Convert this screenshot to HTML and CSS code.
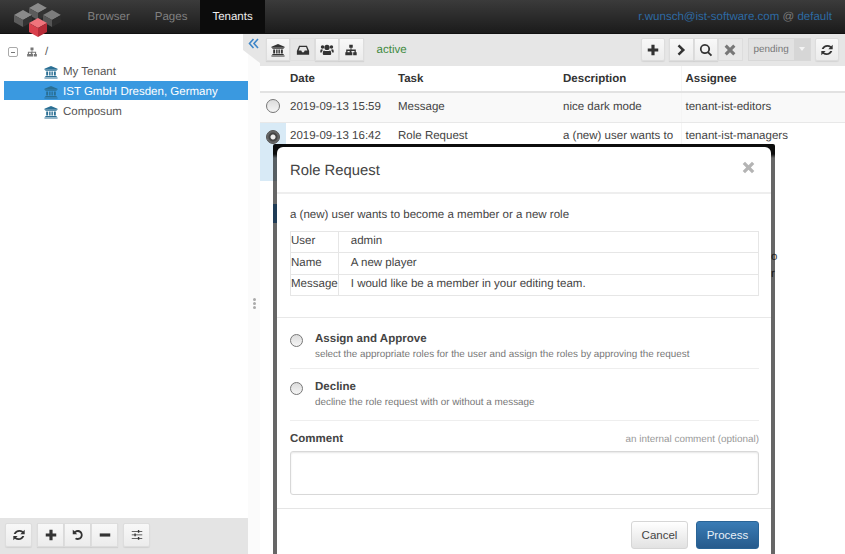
FILE: index.html
```html
<!DOCTYPE html>
<html lang="en">
<head>
    <meta charset="UTF-8">
    <title>Tenants</title>
    <link rel="stylesheet" href="styles.css">
</head>
<body>
    <svg class="icon-defs" width="0" height="0">
        <defs>
            <symbol id="i-bank" viewBox="0 0 16 16"><path d="M8 1l7.500 3.400v1H.5v-1zM1.500 6h13v.8h-13zM2.500 7.400h2.200v4.600H2.500zM5.900 7.400h1.600v4.600H5.900zM8.500 7.400h1.600v4.600H8.500zM11.300 7.400h2.200v4.600h-2.200zM1.500 12.600h13v1.100h-13zM.5 14.200h15v1.300H.5z"/></symbol>
            <symbol id="i-inbox" viewBox="0 0 16 16"><path fill-rule="evenodd" d="M3.500 3h9l2.500 6v4.500H1V9zM4.500 4.500L3 8.700h3l1 1.800h2l1-1.800h3l-1.500-4.200z"/></symbol>
            <symbol id="i-users" viewBox="0 0 16 16"><circle cx="8" cy="5" r="3"/><circle cx="2.900" cy="4.500" r="2"/><circle cx="13.100" cy="4.500" r="2"/><path d="M4.500 8.600c1 .9 6 .9 7 0 1 .3 1.300 1.900 1.300 3.600 0 1-.6 1.600-1.500 1.600H4.700c-.9 0-1.500-.6-1.500-1.600C3.200 10.500 3.500 8.900 4.500 8.600zM.3 10c0-1.500.3-2.800 1-3 .5.500 1.200.6 1.900.5-.3.800-.2 1.300-.5 1.800-.7.500-1 1.300-1.100 1.900C.8 11.200.3 10.800.3 10zM15.700 10c0-1.500-.3-2.800-1-3-.5.500-1.200.6-1.900.5.300.8.200 1.300.5 1.800.7.500 1 1.300 1.100 1.900.8 0 1.300-.4 1.300-1.200z"/></symbol>
            <symbol id="i-sitemap" viewBox="0 0 16 16"><path d="M6 2h4v3.500H8.500V7.500h5v3h1v3.500h-4v-3.500h1.500V9h-3.500v1.500h1v3.500h-4v-3.500h1V9H4v1.500h1.500v3.500h-4v-3.500h1v-3h5V5.500H6z"/></symbol>
            <symbol id="i-refresh" viewBox="0 0 16 16"><path d="M14.500 2v5h-5l1.900-1.900C9.200 3.400 5.700 4 4.300 6.800H2C3.500 2.400 8.800.9 12.800 3.700zM1.500 14V9h5L4.600 10.900c2.200 1.700 5.700 1.100 7.100-1.700H14c-1.500 4.400-6.800 5.900-10.800 3.100z"/></symbol>
            <symbol id="i-plus" viewBox="0 0 16 16"><path d="M6.200 2h3.600v4.200H14v3.600H9.800V14H6.200V9.800H2V6.200h4.200z"/></symbol>
            <symbol id="i-minus" viewBox="0 0 16 16"><path d="M2 6.200h12v3.600H2z"/></symbol>
            <symbol id="i-next" viewBox="0 0 16 16"><path d="M5 1.800L11.500 8 5 14.200 3 12.200 7.300 8 3 3.800z"/></symbol>
            <symbol id="i-search" viewBox="0 0 16 16"><path fill-rule="evenodd" d="M6.800 1a5.800 5.800 0 0 1 4.700 9.200l3.500 3.500-1.500 1.500-3.500-3.500A5.800 5.800 0 1 1 6.800 1zm0 2a3.800 3.800 0 1 0 0 7.600 3.800 3.800 0 0 0 0-7.600z"/></symbol>
            <symbol id="i-times" viewBox="0 0 16 16"><path d="M4.300 1.800L8 5.500l3.700-3.700 2.500 2.500L10.500 8l3.700 3.700-2.500 2.500L8 10.500l-3.700 3.700-2.500-2.500L5.500 8 1.800 4.300z"/></symbol>
            <symbol id="i-undo" viewBox="0 0 16 16"><path d="M2 2v5.200h5.200L5.300 5.300c2.100-1.600 5.700-.6 6 2.500.2 3-3 4.700-5.400 3.200l-1.400 1.600c3.800 2.500 8.800.2 8.800-4.600 0-4.800-5.600-7.400-9.100-4.300z"/></symbol>
            <symbol id="i-sliders" viewBox="0 0 16 16"><path d="M2 3.500h7V2.400h1.600v1.100H14v.9h-3.400v1.100H9V4.400H2zM2 7.500h3V6.400h1.600v1.100H14v.9H6.600v1.100H5V8.400H2zM2 11.500h7v-1.100h1.600v1.100H14v.9h-3.400v1.100H9v-1.100H2z"/></symbol>
        </defs>
    </svg>

    <header class="app-header">
        <svg class="logo" width="72" height="37" viewBox="0 0 72 37">
            <g><polygon points="38,3 47,8 38,13 29,8" fill="#8a8a8a"/><polygon points="29,8 38,13 38,20 29,15" fill="#5c5c5c"/><polygon points="47,8 38,13 38,20 47,15" fill="#333"/></g>
            <g><polygon points="23,10 32,15 23,20 14,15" fill="#8a8a8a"/><polygon points="14,15 23,20 23,27 14,22" fill="#5c5c5c"/><polygon points="32,15 23,20 23,27 32,22" fill="#333"/></g>
            <g><polygon points="52,10 61,15 52,20 43,15" fill="#7c7c7c"/><polygon points="43,15 52,20 52,27 43,22" fill="#555"/><polygon points="61,15 52,20 52,27 61,22" fill="#2c2c2c"/></g>
            <g><polygon points="38,18 47,23 38,28 29,23" fill="#f0747c"/><polygon points="29,23 38,28 38,37 29,32" fill="#d9404c"/><polygon points="47,23 38,28 38,37 47,32" fill="#b72c38"/></g>
        </svg>
        <nav class="nav-tabs">
            <a class="nav-tab">Browser</a>
            <a class="nav-tab">Pages</a>
            <a class="nav-tab active">Tenants</a>
        </nav>
        <div class="user-info"><a>r.wunsch@ist-software.com</a> @ <a>default</a></div>
    </header>

    <main class="workspace">
        <aside class="tree-pane">
            <ul class="tree">
                <li class="tree-row root">
                    <span class="tree-toggle"></span>
                    <svg class="tree-icon root-icon"><use href="#i-sitemap"/></svg>
                    <span>/</span>
                </li>
                <li class="tree-row"><svg class="tree-icon"><use href="#i-bank"/></svg><span>My Tenant</span></li>
                <li class="tree-row selected"><svg class="tree-icon"><use href="#i-bank"/></svg><span>IST GmbH Dresden, Germany</span></li>
                <li class="tree-row"><svg class="tree-icon"><use href="#i-bank"/></svg><span>Composum</span></li>
            </ul>
            <div class="tree-toolbar">
                <button class="tool-btn wide"><svg><use href="#i-refresh"/></svg></button>
                <div class="btn-group">
                    <button class="tool-btn wide"><svg><use href="#i-plus"/></svg></button>
                    <button class="tool-btn wide"><svg><use href="#i-undo"/></svg></button>
                    <button class="tool-btn wide"><svg><use href="#i-minus"/></svg></button>
                </div>
                <button class="tool-btn wide"><svg><use href="#i-sliders"/></svg></button>
            </div>
        </aside>

        <div class="splitter">
            <div class="collapse-tab">
                <svg width="11" height="11" viewBox="0 0 11 11"><path d="M5.500 1L1.500 5.500l4 4.500M10 1L6 5.500l4 4.500" fill="none" stroke="#3f86c8" stroke-width="1.600"/></svg>
            </div>
            <div class="grip"><i></i><i></i><i></i></div>
        </div>

        <section class="task-pane">
            <div class="task-toolbar">
                <div class="btn-group">
                    <button class="tool-btn"><svg><use href="#i-bank"/></svg></button>
                    <button class="tool-btn pressed"><svg><use href="#i-inbox"/></svg></button>
                    <button class="tool-btn"><svg><use href="#i-users"/></svg></button>
                    <button class="tool-btn"><svg><use href="#i-sitemap"/></svg></button>
                </div>
                <span class="scope-label">active</span>
                <div class="toolbar-right">
                    <button class="tool-btn"><svg><use href="#i-plus"/></svg></button>
                    <div class="btn-group">
                        <button class="tool-btn"><svg><use href="#i-next"/></svg></button>
                        <button class="tool-btn"><svg><use href="#i-search"/></svg></button>
                        <button class="tool-btn disabled"><svg><use href="#i-times"/></svg></button>
                    </div>
                    <div class="state-select"><span>pending</span><b></b></div>
                    <button class="tool-btn"><svg><use href="#i-refresh"/></svg></button>
                </div>
            </div>
            <table class="task-table">
                <thead>
                    <tr><th class="col-select"></th><th class="col-date">Date</th><th class="col-task">Task</th><th class="col-desc">Description</th><th>Assignee</th></tr>
                </thead>
                <tbody>
                    <tr class="odd">
                        <td class="col-select"><span class="radio"></span></td>
                        <td>2019-09-13 15:59</td><td>Message</td><td>nice dark mode</td><td>tenant-ist-editors</td>
                    </tr>
                    <tr class="current">
                        <td class="col-select"><span class="radio checked"></span></td>
                        <td>2019-09-13 16:42</td><td>Role Request</td><td>a (new) user wants to become a member or a new role</td><td>tenant-ist-managers</td>
                    </tr>
                    <tr class="peek">
                        <td class="peek-select"><span class="peek-mark"></span></td>
                        <td></td><td></td><td></td>
                        <td class="peek-text"><div>o</div><div>r</div></td>
                    </tr>
                </tbody>
            </table>
        </section>
    </main>

    <div class="modal">
        <div class="modal-content">
            <div class="modal-header">
                <h4>Role Request</h4>
                <svg class="modal-close"><use href="#i-times"/></svg>
            </div>
            <div class="modal-section">
                <p class="request-text">a (new) user wants to become a member or a new role</p>
                <table class="request-table">
                    <tr><td>User</td><td>admin</td></tr>
                    <tr><td>Name</td><td>A new player</td></tr>
                    <tr><td>Message</td><td>I would like be a member in your editing team.</td></tr>
                </table>
            </div>
            <div class="modal-section form-section">
                <label class="option">
                    <span class="radio"></span>
                    <span><strong>Assign and Approve</strong><small>select the appropriate roles for the user and assign the roles by approving the request</small></span>
                </label>
                <label class="option">
                    <span class="radio"></span>
                    <span><strong>Decline</strong><small>decline the role request with or without a message</small></span>
                </label>
                <div class="comment-head"><strong>Comment</strong><small>an internal comment (optional)</small></div>
                <div class="comment-box"></div>
            </div>
            <div class="modal-footer">
                <button class="btn">Cancel</button>
                <button class="btn primary">Process</button>
            </div>
        </div>
    </div>
</body>
</html>
```

FILE: styles.css
```css
* {
    box-sizing: border-box;
}
html, body {
    height: 100%;
}
body {
    margin: 0;
    overflow: hidden;
    display: flex;
    flex-direction: column;
    position: relative;
    font-family: "Liberation Sans", Arial, sans-serif;
    font-size: 11.53px;
    text-rendering: geometricPrecision;
    color: #444;
    background: #fff;
}
.icon-defs {
    position: absolute;
}
svg {
    fill: currentColor;
}

/* header */
.app-header {
    height: 34px;
    flex: none;
    position: relative;
    z-index: 1;
    display: flex;
    align-items: flex-start;
    background: linear-gradient(#3b3b3b, #1b1b1b);
    border-bottom: 1px solid #111;
}
.logo {
    flex: none;
}
.nav-tabs {
    display: flex;
    margin-left: 3px;
}
.nav-tab {
    height: 33px;
    padding: 0 12.5px;
    line-height: 34px;
    color: #808080;
}
.nav-tab.active {
    color: #eee;
    background: #0c0c0c;
}
.user-info {
    margin-left: auto;
    padding-right: 13px;
    line-height: 34px;
    color: #7a7a7a;
}
.user-info a {
    color: #2d6aa3;
}

.workspace {
    flex: 1;
    min-height: 0;
    display: flex;
}

/* tree */
.tree-pane {
    width: 248px;
    flex: none;
    display: flex;
    flex-direction: column;
    background: #fff;
}
.tree {
    flex: 1;
    margin: 0;
    padding: 7px 0 0 4px;
    list-style: none;
}
.tree-row {
    height: 20px;
    padding: 2px 0 0 40px;
    display: flex;
    align-items: center;
    color: #555;
}
.tree-row.root {
    padding-left: 4px;
}
.tree-row.selected {
    height: 19px;
    margin-bottom: 1px;
    background: #3a99e0;
    color: #fff;
}
.tree-toggle {
    width: 10px;
    height: 10px;
    margin-right: 8px;
    border: 1px solid #aaa;
    border-radius: 2px;
    display: flex;
    align-items: center;
    justify-content: center;
}
.tree-toggle::before {
    content: "";
    width: 4px;
    height: 1px;
    background: #777;
}
.tree-icon {
    width: 14px;
    height: 14px;
    margin-right: 5px;
    color: #2a6f94;
}
.root-icon {
    width: 12px;
    height: 12px;
    margin-right: 7px;
    color: #777;
}
.tree-toolbar {
    height: 36px;
    flex: none;
    padding: 5px;
    display: flex;
    gap: 5px;
    background: #e4e4e4;
}

/* buttons */
.btn-group {
    display: flex;
}
.tool-btn {
    width: 24.4px;
    height: 23px;
    padding: 0;
    display: flex;
    align-items: center;
    justify-content: center;
    color: #333;
    background: linear-gradient(#f8f8f8, #ececec);
    border: 1px solid #ddd;
    border-radius: 2px;
    box-shadow: 0 1px 1px rgba(0, 0, 0, 0.08);
}
.tool-btn.wide {
    width: 27px;
    height: 24px;
}
.btn-group .tool-btn {
    border-radius: 0;
}
.tool-btn svg {
    width: 14px;
    height: 14px;
}
.tool-btn.pressed {
    background: #e6e6e6;
    border-color: #e0e0e0;
    box-shadow: none;
}
.tool-btn.disabled {
    background: #e8e8e8;
    color: #777;
    box-shadow: none;
}

/* splitter */
.splitter {
    width: 12px;
    flex: none;
    position: relative;
    display: flex;
    align-items: center;
    justify-content: center;
    background: #fbfbfb;
}
.collapse-tab {
    position: absolute;
    top: 0;
    right: 0;
    width: 17px;
    height: 29px;
    padding: 4px 0 0 5px;
    background: #e6e6e6;
    clip-path: polygon(0 0, 100% 0, 100% 100%, 0 55%);
}
.collapse-tab svg {
    display: block;
}
.grip {
    display: flex;
    flex-direction: column;
    gap: 1px;
    margin-top: 18px;
}
.grip i {
    width: 3px;
    height: 3px;
    border-radius: 50%;
    background: #aaa;
}

/* task list */
.task-pane {
    flex: 1;
    min-width: 0;
    display: flex;
    flex-direction: column;
}
.task-toolbar {
    height: 32px;
    flex: none;
    padding: 4px 6px;
    display: flex;
    align-items: flex-start;
    background: #e6e6e6;
}
.scope-label {
    margin-left: 13px;
    line-height: 25px;
    color: #3f8a3f;
}
.toolbar-right {
    margin-left: auto;
    display: flex;
    gap: 4px;
}
.state-select {
    width: 63px;
    height: 23px;
    margin-left: 1px;
    display: flex;
    border: 1px solid #d8d8d8;
    font-size: 9.88px;
    color: #777;
    background: #ddd;
}
.state-select span {
    flex: 1;
    padding-left: 5px;
    line-height: 22px;
    background: #e2e2e2;
}
.state-select b {
    width: 16px;
    position: relative;
    background: #d6d6d6;
}
.state-select b::after {
    content: "";
    position: absolute;
    top: 8px;
    left: 5px;
    border: 3px solid transparent;
    border-top: 4px solid #f4f4f4;
}
.task-table {
    width: 100%;
    border-collapse: collapse;
    table-layout: fixed;
}
.task-table th {
    height: 26px;
    padding: 0 5px 0 4px;
    text-align: left;
    color: #333;
    border-bottom: 2px solid #e2e2e2;
}
.task-table td {
    padding: 5px 4px;
    line-height: 16px;
    vertical-align: top;
    border-bottom: 1px solid #e8e8e8;
}
.task-table tr.odd td {
    height: 30px;
    padding-top: 6px;
    background: #f9f9f9;
}
.task-table tr.current td {
    border-bottom: 0;
}
.task-table th:last-child,
.task-table td:last-child {
    border-left: 1px solid #f5f5f5;
}
.col-select {
    width: 26px;
}
.col-date {
    width: 108px;
}
.col-task {
    width: 165px;
}
.col-desc {
    width: 122px;
}
.task-table td.col-select {
    padding: 7px 0 0 6px;
    background: #d8eaf6;
}
.task-table tr.peek td {
    border: 0;
    background: none;
}
.task-table td.peek-select {
    padding: 23px 0 0 13px;
}
.peek-mark {
    display: block;
    width: 12px;
    height: 19px;
    background: #4f95d6;
}
.task-table td.peek-text {
    padding: 68px 0 0 90px;
    line-height: 17px;
}

/* radios */
.radio {
    display: block;
    width: 14px;
    height: 14px;
    flex: none;
    border: 1px solid #777;
    border-radius: 50%;
    background: linear-gradient(#dcdcdc, #f5f5f5);
}
.radio.checked {
    border: 1px solid #555;
    background: radial-gradient(circle, #eee 0, #eee 2px, #444 3px, #444 4px, #666 5px);
}

/* dialog, it hangs over the window bottom */
.modal {
    position: absolute;
    left: 273px;
    top: 144px;
    width: 502px;
    height: 440px;
    padding: 3px 4px 0;
    background: linear-gradient(rgba(0, 0, 0, 0.95) 10px, rgba(0, 0, 0, 0.6) 14px);
    border-radius: 2px 2px 0 0;
}
.modal-content {
    height: 100%;
    background: #fff;
    border-radius: 6px 6px 0 0;
}
.modal-header {
    height: 47px;
    padding: 2px 15px 0 13px;
    display: flex;
    align-items: center;
    justify-content: space-between;
    border-bottom: 2px solid #eee;
}
.modal-header h4 {
    margin: 0;
    font-size: 14.82px;
    font-weight: normal;
    color: #444;
}
.modal-close {
    width: 15px;
    height: 15px;
    margin-bottom: 7px;
    color: #b4b4b4;
}
.modal-section {
    padding: 13px 12px 0 13px;
}
.request-text {
    margin: 0 0 8px;
    line-height: 16px;
}
.request-table {
    width: 100%;
    border-collapse: collapse;
    margin-bottom: 21px;
}
.request-table td {
    height: 21.4px;
    padding: 0 0 2px 12px;
    border: 1px solid #e6e6e6;
}
.request-table td:first-child {
    width: 47px;
    padding-left: 0;
}
.form-section {
    padding-top: 3px;
    border-top: 1px solid #e8e8e8;
}
.option {
    display: flex;
    gap: 12px;
    height: 48px;
    padding-top: 11px;
    border-bottom: 1px solid #eee;
}
.option + .option {
    height: 52px;
}
.option .radio {
    width: 13px;
    height: 13px;
    margin-top: 2px;
}
.option strong,
.comment-head strong {
    display: block;
    font-size: 11.53px;
    line-height: 14px;
    color: #444;
}
.option small {
    display: block;
    margin-top: 2px;
    font-size: 9.88px;
    line-height: 13px;
    color: #777;
}
.comment-head {
    margin-top: 11px;
    display: flex;
    align-items: baseline;
    justify-content: space-between;
}
.comment-head small {
    font-size: 9.88px;
    color: #999;
}
.comment-box {
    height: 44px;
    margin-top: 5px;
    border: 1px solid #d8d8d8;
    border-radius: 3px;
    box-shadow: inset 0 1px 2px rgba(0, 0, 0, 0.1);
}
.modal-footer {
    margin-top: 13px;
    padding: 12px 12px 0 0;
    display: flex;
    justify-content: flex-end;
    gap: 8px;
    border-top: 1px solid #e5e5e5;
}
.btn {
    height: 28px;
    width: 57px;
    padding: 0;
    font: inherit;
    color: #444;
    background: linear-gradient(#fff, #e2e2e2);
    border: 1px solid #d6d6d6;
    border-radius: 3px;
}
.btn.primary {
    width: 63px;
    color: #e8f0f8;
    background: linear-gradient(#3a7cb5, #265a8c);
    border-color: #2a6496;
}
```
